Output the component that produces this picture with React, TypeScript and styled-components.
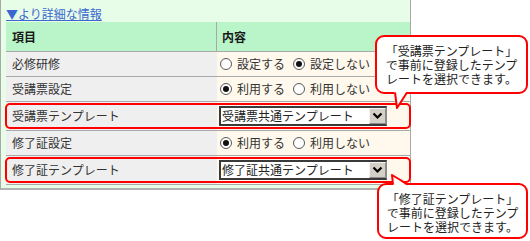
import React from "react";
import styled, { createGlobalStyle } from "styled-components";

const GlobalStyle = createGlobalStyle`
  html, body {
    margin: 0;
    padding: 0;
    background: #ffffff;
  }
  body {
    font-family: "Noto Sans CJK JP", "Noto Sans", sans-serif;
    font-size: 12px;
    color: #333333;
  }
`;

const Root = styled.div`
  position: relative;
  width: 530px;
  height: 241px;
  overflow: hidden;
`;

const Panel = styled.div`
  width: 411px;
  box-sizing: border-box;
  background: #e8fde8;
  border-left: 1px solid #a9a9a9;
  border-right: 1px solid #a9a9a9;
  border-bottom: 2px solid #b2b2b2;
  padding: 0 0 3px 5px;
`;

const DetailLink = styled.a`
  display: block;
  height: 22px;
  box-sizing: border-box;
  padding-top: 7px;
  font-size: 12px;
  line-height: 14px;
  color: #3a68cf;
  text-decoration: underline;
  cursor: pointer;
`;

const Table = styled.div`
  width: 404px;
  display: flex;
  flex-direction: column;
`;

const Row = styled.div<{ $height: number; $highlight?: boolean }>`
  position: relative;
  display: grid;
  grid-template-columns: 211px 193px;
  height: ${(p) => p.$height}px;
  border-bottom: 1px solid #a9a9a9;

  ${(p) =>
    p.$highlight &&
    `
    &::after {
      content: "";
      position: absolute;
      left: -1px;
      right: -1px;
      top: 1px;
      height: 26px;
      box-sizing: border-box;
      border: 2px solid #ff0000;
      border-radius: 5px;
      pointer-events: none;
    }
  `}
`;

const HeadCell = styled.div<{ $divider?: boolean }>`
  display: flex;
  align-items: center;
  background: #b9f5c9;
  font-weight: bold;
  color: #1a1a1a;
  font-size: 12px;
  padding-left: ${(p) => (p.$divider ? "6px" : "5px")};
  border-right: ${(p) => (p.$divider ? "1px solid #a9a9a9" : "none")};
`;

const LabelCell = styled.div`
  display: flex;
  align-items: center;
  background: #efefef;
  padding-left: 6px;
  font-size: 12px;
  line-height: 14px;
`;

const ValueCell = styled.div`
  display: flex;
  align-items: center;
  background: #fff8ec;
  padding-left: 2px;
  font-size: 12px;
  line-height: 14px;
`;

const RadioOption = styled.label`
  display: flex;
  align-items: center;
  margin-left: 1px;
  margin-right: 7px;
  gap: 5px;
`;

const RadioMark = styled.span<{ $checked?: boolean }>`
  position: relative;
  width: 12px;
  height: 12px;
  box-sizing: border-box;
  border-radius: 50%;
  border: 1px solid #5a5a5a;
  background: radial-gradient(circle at 60% 60%, #ffffff 55%, #e6e6e6 100%);
  flex: none;

  &::after {
    content: "";
    display: ${(p) => (p.$checked ? "block" : "none")};
    position: absolute;
    left: 2px;
    top: 2px;
    width: 6px;
    height: 6px;
    border-radius: 50%;
    background: #111111;
  }
`;

const Select = styled.div`
  display: flex;
  width: 168px;
  height: 20px;
  box-sizing: border-box;
  border: 2px solid #3a3a3a;
  border-right: 1px solid #8a8a8a;
  background: #ffffff;
`;

const SelectText = styled.span`
  flex: 1;
  display: flex;
  align-items: center;
  padding-left: 1px;
  font-size: 12px;
  color: #222222;
  white-space: nowrap;
`;

const SelectButton = styled.span`
  width: 17px;
  flex: none;
  display: flex;
  align-items: center;
  justify-content: center;
  box-sizing: border-box;
  background: #d4d0c8;
  border: 1px solid #8c8c8c;
  border-top-color: #f4f4f4;
  border-left-color: #f4f4f4;
`;

const Bubble = styled.div<{ $left: number; $top: number; $width: number; $height: number }>`
  position: absolute;
  left: ${(p) => p.$left}px;
  top: ${(p) => p.$top}px;
  width: ${(p) => p.$width}px;
  height: ${(p) => p.$height}px;
  box-sizing: border-box;
  border: 2px solid #ff0000;
  border-radius: 9px;
  background: #ffffff;
  padding-top: 7px;
  display: flex;
  flex-direction: column;
  align-items: center;
  color: #222222;
`;

const BubbleLine = styled.div`
  font-size: 12px;
  line-height: 14px;
  white-space: nowrap;
`;

const Tail = styled.svg<{ $left: number; $top: number }>`
  position: absolute;
  left: ${(p) => p.$left}px;
  top: ${(p) => p.$top}px;
  overflow: visible;
`;

const Chevron = () => (
  <svg width="11" height="8" viewBox="0 0 11 8">
    <path d="M1.5 1.5 L5.5 5.5 L9.5 1.5" fill="none" stroke="#000" strokeWidth="2.2" />
  </svg>
);

const Radio = ({ checked, label }: { checked?: boolean; label: string }) => (
  <RadioOption>
    <RadioMark $checked={checked} />
    <span>{label}</span>
  </RadioOption>
);

const TemplateSelect = ({ value }: { value: string }) => (
  <Select>
    <SelectText>{value}</SelectText>
    <SelectButton>
      <Chevron />
    </SelectButton>
  </Select>
);

const Callout = ({
  left,
  top,
  width,
  height,
  lines,
}: {
  left: number;
  top: number;
  width: number;
  height: number;
  lines: string[];
}) => (
  <Bubble $left={left} $top={top} $width={width} $height={height}>
    {lines.map((line) => (
      <BubbleLine key={line}>{line}</BubbleLine>
    ))}
  </Bubble>
);

export default function App() {
  return (
    <>
      <GlobalStyle />
      <Root>
        <Panel>
          <DetailLink>▼より詳細な情報</DetailLink>
          <Table>
            <Row $height={29}>
              <HeadCell $divider>項目</HeadCell>
              <HeadCell>内容</HeadCell>
            </Row>
            <Row $height={24}>
              <LabelCell>必修研修</LabelCell>
              <ValueCell>
                <Radio label="設定する" />
                <Radio checked label="設定しない" />
              </ValueCell>
            </Row>
            <Row $height={24}>
              <LabelCell>受講票設定</LabelCell>
              <ValueCell>
                <Radio checked label="利用する" />
                <Radio label="利用しない" />
              </ValueCell>
            </Row>
            <Row $height={28} $highlight>
              <LabelCell>受講票テンプレート</LabelCell>
              <ValueCell>
                <TemplateSelect value="受講票共通テンプレート" />
              </ValueCell>
            </Row>
            <Row $height={24}>
              <LabelCell>修了証設定</LabelCell>
              <ValueCell>
                <Radio checked label="利用する" />
                <Radio label="利用しない" />
              </ValueCell>
            </Row>
            <Row $height={28} $highlight>
              <LabelCell>修了証テンプレート</LabelCell>
              <ValueCell>
                <TemplateSelect value="修了証共通テンプレート" />
              </ValueCell>
            </Row>
          </Table>
        </Panel>

        <Callout
          left={375}
          top={35}
          width={153}
          height={59}
          lines={["「受講票テンプレート」", "で事前に登録したテンプ", "レートを選択できます。"]}
        />
        <Tail $left={388} $top={88} width="22" height="22" viewBox="0 0 22 22">
          <polygon points="6,2 9,20 20,2" fill="#ffffff" />
          <polyline points="7,4.5 9,20 19,4.5" fill="none" stroke="#ff0000" strokeWidth="2" strokeLinejoin="round" />
        </Tail>

        <Callout
          left={377}
          top={183}
          width={151}
          height={56}
          lines={["「修了証テンプレート」", "で事前に登録したテンプ", "レートを選択できます。"]}
        />
        <Tail $left={385} $top={170} width="28" height="20" viewBox="0 0 28 20">
          <polygon points="8.5,17 7,5 24,17" fill="#ffffff" />
          <polyline points="8,14.5 7,5 23,14.5" fill="none" stroke="#ff0000" strokeWidth="2" strokeLinejoin="round" />
        </Tail>
      </Root>
    </>
  );
}
